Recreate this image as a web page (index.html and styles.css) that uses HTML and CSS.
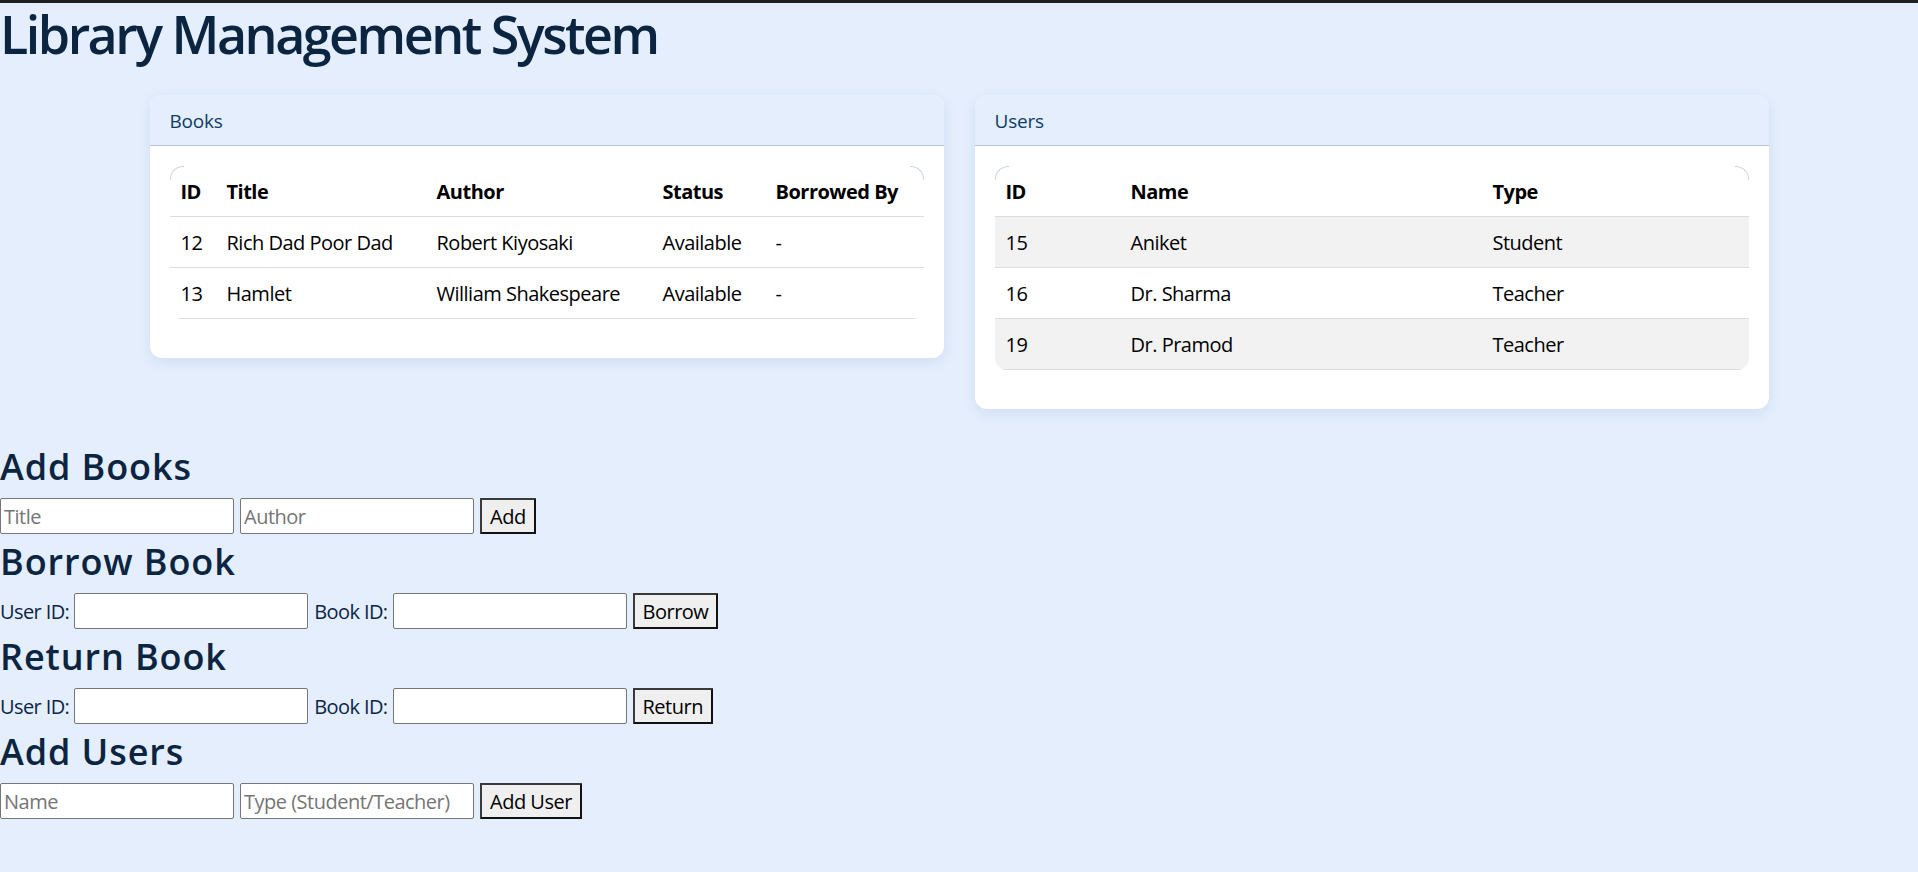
FILE: index.html
```html
<!DOCTYPE html>
<html lang="en">
<head>
<meta charset="utf-8">
<title>Library Management System</title>
<link rel="stylesheet" href="styles.css">
</head>
<body>
<h1 class="title">Library Management System</h1>

<div class="panels">
  <section class="card">
    <div class="card-header">Books</div>
    <div class="card-body">
      <div class="table-wrap">
        <table class="data">
          <thead>
            <tr>
              <th class="b-id">ID</th>
              <th class="b-title">Title</th>
              <th class="b-author">Author</th>
              <th class="b-status">Status</th>
              <th class="b-by">Borrowed By</th>
            </tr>
          </thead>
          <tbody>
            <tr><td>12</td><td>Rich Dad Poor Dad</td><td>Robert Kiyosaki</td><td>Available</td><td>-</td></tr>
            <tr><td>13</td><td>Hamlet</td><td>William Shakespeare</td><td>Available</td><td>-</td></tr>
          </tbody>
        </table>
      </div>
    </div>
  </section>

  <section class="card">
    <div class="card-header">Users</div>
    <div class="card-body">
      <div class="table-wrap">
        <table class="data striped">
          <thead>
            <tr>
              <th class="u-id">ID</th>
              <th class="u-name">Name</th>
              <th class="u-type">Type</th>
            </tr>
          </thead>
          <tbody>
            <tr><td>15</td><td>Aniket</td><td>Student</td></tr>
            <tr><td>16</td><td>Dr. Sharma</td><td>Teacher</td></tr>
            <tr><td>19</td><td>Dr. Pramod</td><td>Teacher</td></tr>
          </tbody>
        </table>
      </div>
    </div>
  </section>
</div>

<section class="forms">
  <h2 class="form-title">Add Books</h2>
  <div class="form-row">
    <input class="field" type="text" placeholder="Title">
    <input class="field" type="text" placeholder="Author">
    <button class="btn" type="button">Add</button>
  </div>

  <h2 class="form-title">Borrow Book</h2>
  <div class="form-row">
    <label class="label">User ID:</label>
    <input class="field" type="text">
    <label class="label">Book ID:</label>
    <input class="field" type="text">
    <button class="btn" type="button">Borrow</button>
  </div>

  <h2 class="form-title">Return Book</h2>
  <div class="form-row">
    <label class="label">User ID:</label>
    <input class="field" type="text">
    <label class="label">Book ID:</label>
    <input class="field" type="text">
    <button class="btn" type="button">Return</button>
  </div>

  <h2 class="form-title">Add Users</h2>
  <div class="form-row">
    <input class="field" type="text" placeholder="Name">
    <input class="field" type="text" placeholder="Type (Student/Teacher)">
    <button class="btn" type="button">Add User</button>
  </div>
</section>
</body>
</html>
```

FILE: styles.css
```css
* {
  box-sizing: border-box;
}

html, body {
  margin: 0;
  padding: 0;
}

body {
  background: #e4eefd;
  border-top: 3px solid #1f1f1f;
  font-family: "Open Sans", "Noto Sans", sans-serif;
  font-size: 20px;
  color: #0b2545;
  min-height: 872px;
}

.title {
  margin: -3px 0 0;
  font-size: 52px;
  line-height: 68px;
  font-weight: 600;
  color: #0b2440;
  letter-spacing: -2.5px;
}

.panels {
  display: flex;
  align-items: flex-start;
  gap: 31px;
  max-width: 1619px;
  margin: 27px auto 0;
}

.card {
  flex: 1;
  background: #fff;
  border-radius: 12px;
  box-shadow: 0 4px 14px rgba(40, 80, 150, 0.10);
  overflow: hidden;
}

.card-header {
  background: #e4eefd;
  border-bottom: 1px solid #b8c7db;
  padding: 13px 20px 11px;
  line-height: 26px;
  font-size: 19px;
  color: #0d3b66;
  letter-spacing: -0.2px;
}

.card-body {
  padding: 20px 20px 39px;
}

.table-wrap {
  position: relative;
  border-radius: 12px;
  overflow: hidden;
}

.table-wrap::before,
.table-wrap::after {
  content: "";
  position: absolute;
  top: 0;
  width: 13px;
  height: 13px;
  border-top: 1px solid #c9d3df;
}

.table-wrap::before {
  left: 0;
  border-left: 1px solid #c9d3df;
  border-top-left-radius: 13px;
}

.table-wrap::after {
  right: 0;
  border-right: 1px solid #c9d3df;
  border-top-right-radius: 13px;
}

.data {
  width: 100%;
  border-collapse: collapse;
  table-layout: fixed;
  color: #000;
  font-size: 20px;
  letter-spacing: -0.5px;
}

.data th,
.data td {
  text-align: left;
  padding: 13px 11px 11px;
  line-height: 26px;
  border-bottom: 1px solid #dcdcdc;
  white-space: nowrap;
}

.data th {
  font-weight: 700;
}

.striped tbody tr:nth-child(odd) td {
  background: #f2f2f2;
}

.b-id { width: 46px; }
.b-title { width: 210px; }
.b-author { width: 226px; }
.b-status { width: 113px; }
.b-by { width: 160px; }

.u-id { width: 125px; }
.u-name { width: 362px; }
.u-type { width: 268px; }

.forms {
  margin-top: 30px;
}

.form-title {
  margin: 0 0 8px;
  padding-top: 4px;
  font-size: 36px;
  line-height: 47px;
  font-weight: 600;
  color: #0b2440;
  letter-spacing: 0.9px;
}

.form-row {
  display: flex;
  align-items: center;
  gap: 6px;
  height: 36px;
}

.label {
  font-size: 20px;
  color: #0b2545;
  letter-spacing: -0.6px;
  margin-right: -1px;
}

.field {
  width: 234px;
  height: 36px;
  border: 1px solid #767676;
  border-radius: 2px;
  background: #fff;
  padding: 1px 3px;
  font-family: "Open Sans", "Noto Sans", sans-serif;
  font-size: 20px;
  letter-spacing: -0.5px;
  color: #000;
}

.field::placeholder {
  color: #757575;
}

.btn {
  height: 36px;
  padding: 0 8px;
  background: #efefef;
  border: 2px solid #3a3a3a;
  border-right-color: #111;
  border-bottom-color: #111;
  border-radius: 1px;
  font-family: "Open Sans", "Noto Sans", sans-serif;
  font-size: 20px;
  letter-spacing: -0.5px;
  color: #000;
}
```
